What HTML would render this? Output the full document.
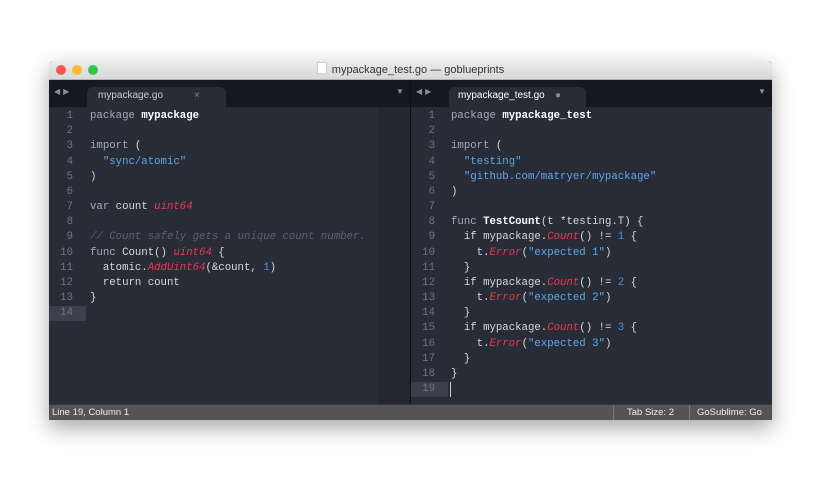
<!DOCTYPE html>
<html><head><style>
body{margin:0;width:820px;height:490px;background:#fff;position:relative;overflow:hidden;font-family:"Liberation Sans",sans-serif}
.win{position:absolute;left:49px;top:61px;width:723px;height:359px;box-shadow:0 8px 22px rgba(0,0,0,.35);background:#282c37;overflow:hidden;border-radius:4px 4px 0 0}
.title{position:absolute;left:0;top:0;width:723px;height:18px;background:linear-gradient(#ececec,#d8d8d8);border-bottom:1px solid #b0b0b0;text-align:center;font-size:11px;line-height:18px;color:#333}
.dot{position:absolute;top:4px;width:10px;height:10px;border-radius:50%}
.tabbar{position:absolute;top:19px;height:27px;background:#16181d}
.tab{position:absolute;top:7px;height:20px;background:#282c37;border-radius:6px 6px 0 0;font-size:10px;color:#c8ccd4;line-height:17px}
.arr{position:absolute;top:7px;font-size:8px;color:#8a8f99;letter-spacing:3px}
.code{position:absolute;top:48px;font-family:"Liberation Mono",monospace;font-size:10.7px;line-height:15.17px;color:#d5d9e0;white-space:pre}
.ln{position:absolute;top:48px;font-family:"Liberation Mono",monospace;font-size:10.7px;line-height:15.17px;color:#6d7586;text-align:right;white-space:pre}
.k{color:#a3abbb}.b{color:#fff;font-weight:bold}.s{color:#5ea8ea}.t{color:#e8394d;font-style:italic}.c{color:#5a6070;font-style:italic}.n{color:#4d8fe0}
.status{position:absolute;left:0;top:343px;width:723px;height:16px;background:#545454;border-top:1px solid #3a3a3a;font-size:9.5px;color:#eee;line-height:16px}
</style></head><body>
<div class="win">
<div class="title"><span class="dot" style="left:7px;background:#fc5753"></span><span class="dot" style="left:23px;background:#fdbc2e"></span><span class="dot" style="left:39px;background:#33c748"></span><span style="display:inline-block;width:8px;height:10px;background:#fff;border:1px solid #ccc;vertical-align:-1px;margin-right:5px"></span>mypackage_test.go — goblueprints</div>
<div class="tabbar" style="left:0;width:361px"><span class="arr" style="left:5px">◀▶</span><div class="tab" style="left:38px;width:128px;padding-left:11px">mypackage.go<span style="position:absolute;left:107px;color:#888">×</span></div><span class="arr" style="left:347px">▼</span></div>
<div style="position:absolute;left:361px;top:19px;width:1px;height:324px;background:#111"></div>
<div class="tabbar" style="left:362px;width:361px"><span class="arr" style="left:5px">◀▶</span><div class="tab" style="left:38px;width:128px;padding-left:9px;color:#fff">mypackage_test.go<span style="position:absolute;left:106px;color:#888">●</span></div><span class="arr" style="left:347px">▼</span></div>
<div style="position:absolute;left:329px;top:46px;width:32px;height:297px;background:#242731"></div>
<div style="position:absolute;left:0;top:245px;width:37px;height:15px;background:#3b404c"></div>
<div style="position:absolute;left:362px;top:321px;width:37px;height:15px;background:#3b404c"></div>
<div style="position:absolute;left:401px;top:321px;width:1px;height:15px;background:#ccc"></div>
<div class="ln" style="left:0;width:24px">1
2
3
4
5
6
7
8
9
10
11
12
13
14</div>
<div class="code" style="left:41px"><span class="k">package</span> <span class="b">mypackage</span>

<span class="k">import</span> (
  <span class="s">"sync/atomic"</span>
)

<span class="k">var</span> count <span class="t">uint64</span>

<span class="c">// Count safely gets a unique count number.</span>
<span class="k">func</span> Count() <span class="t">uint64</span> {
  atomic.<span class="t">AddUint64</span>(&amp;count, <span class="n">1</span>)
  return count
}</div>
<div class="ln" style="left:362px;width:24px">1
2
3
4
5
6
7
8
9
10
11
12
13
14
15
16
17
18
19</div>
<div class="code" style="left:402px"><span class="k">package</span> <span class="b">mypackage_test</span>

<span class="k">import</span> (
  <span class="s">"testing"</span>
  <span class="s">"github.com/matryer/mypackage"</span>
)

<span class="k">func</span> <span class="b">TestCount</span>(t *testing.T) {
  if mypackage.<span class="t">Count</span>() != <span class="n">1</span> {
    t.<span class="t">Error</span>(<span class="s">"expected 1"</span>)
  }
  if mypackage.<span class="t">Count</span>() != <span class="n">2</span> {
    t.<span class="t">Error</span>(<span class="s">"expected 2"</span>)
  }
  if mypackage.<span class="t">Count</span>() != <span class="n">3</span> {
    t.<span class="t">Error</span>(<span class="s">"expected 3"</span>)
  }
}</div>
<div class="status"><span style="position:absolute;left:3px">Line 19, Column 1</span><span style="position:absolute;left:564px;width:1px;height:16px;background:#777"></span><span style="position:absolute;left:578px">Tab Size: 2</span><span style="position:absolute;left:640px;width:1px;height:16px;background:#777"></span><span style="position:absolute;left:648px">GoSublime: Go</span></div>
</div>
</body></html>
